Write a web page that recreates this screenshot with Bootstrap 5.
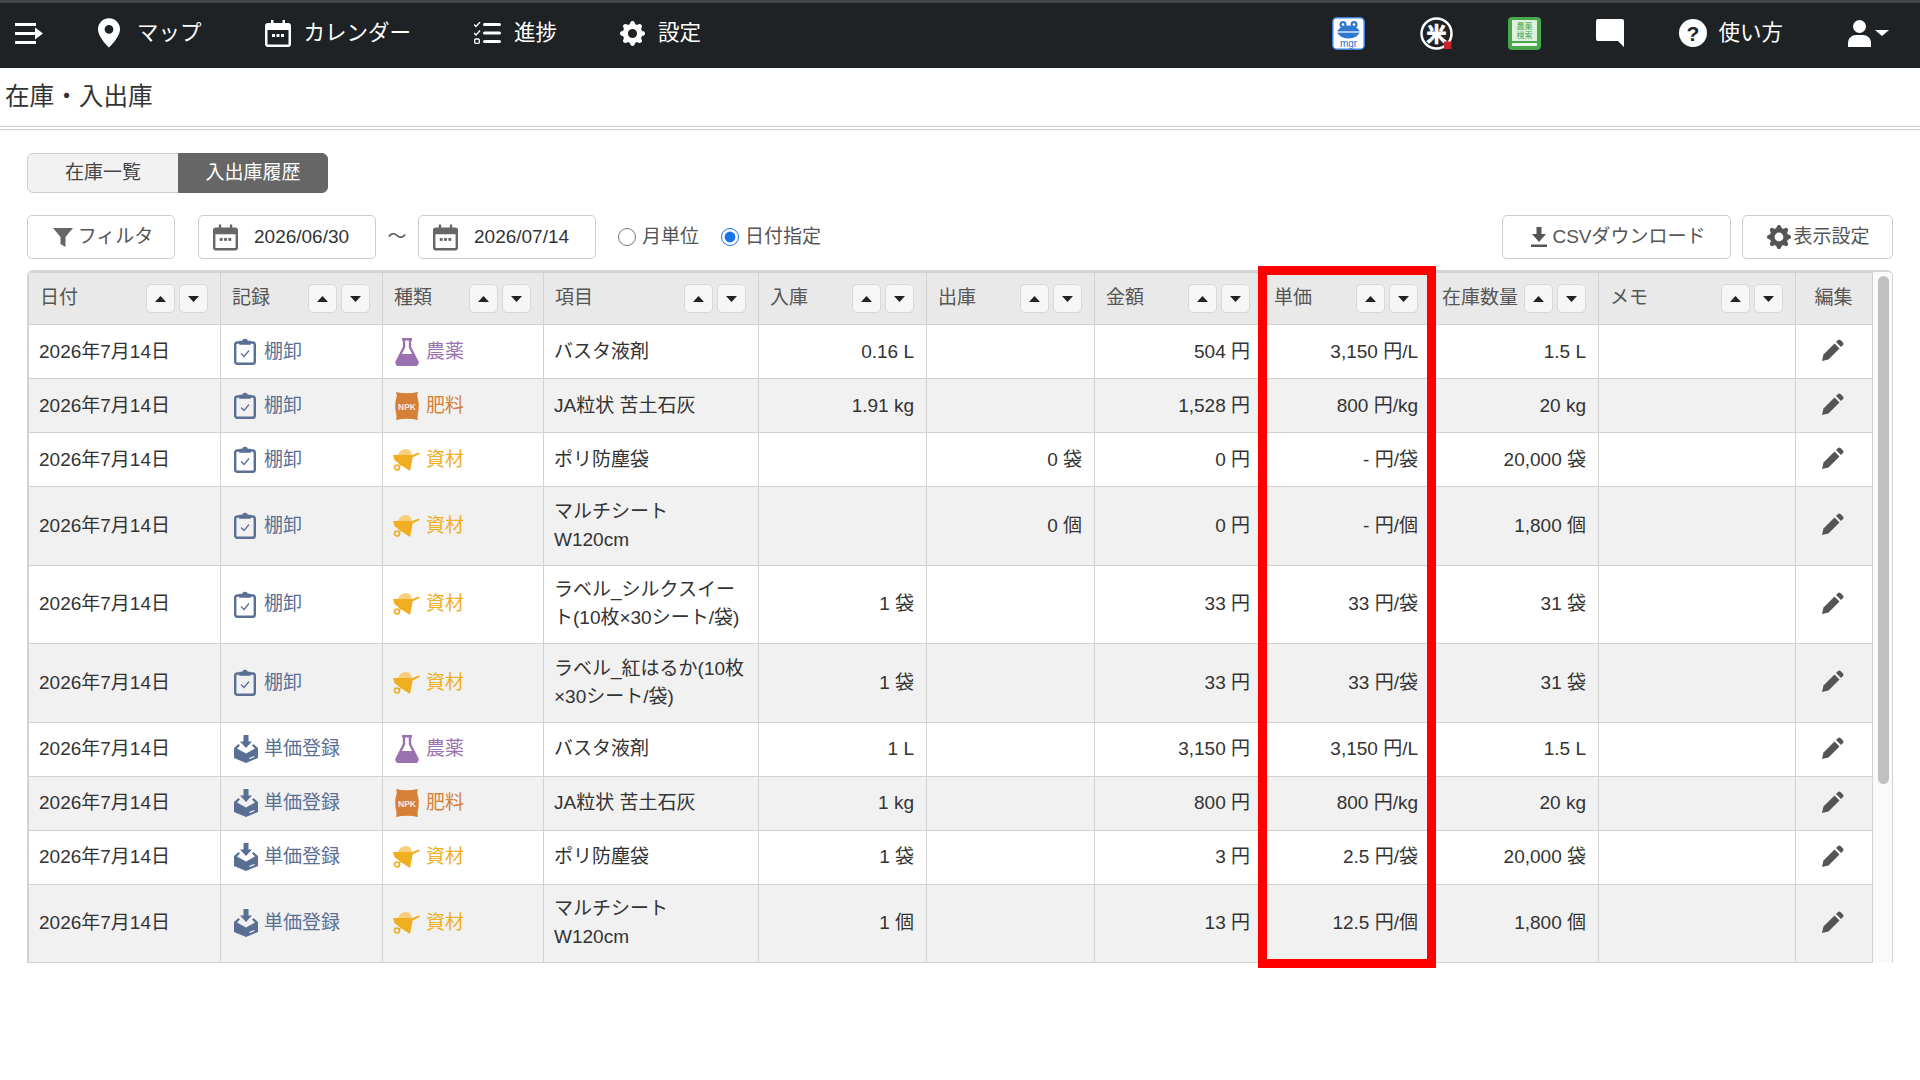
<!DOCTYPE html>
<html lang="ja">
<head>
    <meta charset="UTF-8">
    <meta name="viewport" content="width=device-width, initial-scale=1.0">
    <title>在庫・入出庫</title>
    <link href="https://cdn.jsdelivr.net/npm/bootstrap@5.3.3/dist/css/bootstrap.min.css" rel="stylesheet">
    <script src="https://cdn.jsdelivr.net/npm/bootstrap@5.3.3/dist/js/bootstrap.bundle.min.js"></script>
    <style>
        body {
            font-family: "Liberation Sans", "Noto Sans CJK JP", sans-serif;
            font-size: 19px;
            color: #333;
            background: #fff;
        }
        /* top bar */
        .top-bar {
            height: 68px;
            padding: 0 31px 5px 15px;
            background: #1e2225;
            border-top: 3px solid #444;
            flex-wrap: nowrap;
        }
        .top-group { gap: 63px; }
        .top-group-right { gap: 55px; }
        .navbar-nav .nav-link.top-link {
            color: #fff;
            font-size: 21.5px;
            padding: 0;
            gap: 13px;
        }
        .top-link-pin { margin-left: -8px; }
        .navbar-nav .nav-link.top-link.top-link-pin { gap: 17px; }
        .navbar-nav .nav-link.top-link.top-link-help { gap: 11px; }
        .top-user { margin-left: 10px; }

        /* page title */
        .page-head {
            height: 62px;
            padding-left: 5px;
            font-size: 24.6px;
            color: #333;
            border-bottom: 4px double #ccc;
        }

        .page-body { padding: 23px 27px 60px 27px; }

        /* tabs */
        .tab-btn {
            width: 150px;
            height: 40px;
            padding: 0;
            font-size: 19px;
            background: #f2f2f2;
            color: #444;
            border: 1px solid #ccc;
        }
        .tab-btn-first { width: 152px; }
        .tab-btn.active, .btn-group .tab-btn.active {
            background: #666;
            border-color: #666;
            color: #fff;
        }

        /* filter row */
        .filter-row { height: 44px; margin: 22px 0 11px 0; }
        .tool-btn {
            height: 44px;
            font-size: 19px;
            color: #555;
            background: #fff;
            border: 1px solid #ccc;
            border-radius: 5px;
            padding: 0;
        }
        .btn-filter { width: 148px; gap: 5px; margin-right: 23px; padding-left: 4px; }
        .date-box {
            width: 178px;
            height: 44px;
            padding-left: 14px;
            gap: 16px;
            border: 1px solid #ccc;
            border-radius: 5px;
            color: #333;
        }
        .date-sep { width: 42px; text-align: center; color: #555; }
        .radio-set { margin-left: 22px; gap: 22px; }
        .radio-item { gap: 6px; color: #555; margin: 0; }
        .radio-item input { width: 18px; height: 18px; margin: 0; accent-color: #1a73e8; }
        .btn-csv { width: 229px; gap: 5px; padding-left: 4px; }
        .btn-view { width: 151px; margin-left: 11px; gap: 2px; padding-left: 2px; }

        /* table */
        .tbl-outer { position: relative; }
        .tbl-frame {
            border: 1px solid #d4d4d4;
            border-bottom: 0;
            border-top-width: 2px;
            border-radius: 6px 6px 0 0;
            overflow: hidden;
        }
        .hist-table {
            table-layout: fixed;
            width: 1844px;
            margin: 0;
            border-color: #d2d2d2;
            --bs-table-color: #333;
            color: #333;
        }
        .hist-table th {
            height: 52px;
            padding: 0 12px 0 11px;
            background: #e9e9e9;
            --bs-table-bg: #e9e9e9;
            font-weight: 400;
            font-size: 19px;
            color: #555;
            vertical-align: middle;
        }
        .hist-table td {
            height: 54px;
            padding: 0 12px 0 10px;
            line-height: 28px;
            vertical-align: middle;
        }
        .hist-table tr.row-tall td { height: 78.5px; }
        .hist-table tbody tr:nth-child(even) td { --bs-table-bg: #f1f1f1; }
        .c-date { width: 192px; }
        .c-rec { width: 162px; }
        .c-kind { width: 161px; }
        .c-item { width: 215px; }
        .c-num { width: 168px; }
        .c-stock { width: 168px; }
        .c-memo { width: 197px; }
        .c-edit { width: 77px; }

        .sort-pair { gap: 4px; flex-shrink: 0; }
        .sort-btn {
            width: 29px;
            height: 29px;
            padding: 0;
            background: #f6f6f6;
            border: 1px solid #d8d8d8;
            border-radius: 5px;
        }
        .rec-cell { gap: 6px; color: #5a6f94; padding-left: 3px; }
        .kind-cell { gap: 6px; }
        .kind-nouyaku { color: #9b72b0; }
        .kind-hiryo { color: #d67f36; }
        .kind-shizai { color: #f0ae21; }
        .rec-ico { width: 24px; flex-shrink: 0; }
        .kind-ico { width: 27px; flex-shrink: 0; }
        .edit-ico { display: block; margin: -3px auto 0 auto; }

        /* fake scrollbar */
        .scroll-track { width: 21px; background: #fafafa; padding: 4px 5px 0 5px; }
        .scroll-thumb { width: 11px; height: 508px; background: #c1c1c1; border-radius: 6px; }

        /* red marking over the unit price column */
        .mark-box {
            position: absolute;
            left: 1231px;
            top: -4px;
            width: 178px;
            height: 702px;
            border: 9px solid #f00;
            pointer-events: none;
        }
    </style>
</head>
<body>

<nav class="navbar top-bar">
    <ul class="navbar-nav flex-row align-items-center top-group">
        <li class="nav-item d-flex">
            <svg width="28" height="21" viewBox="0 0 28 21" fill="#fff"><rect y="0" width="21" height="3"/><rect y="9" width="24" height="3"/><rect y="18" width="21" height="3"/><path d="M20 4.500l8 6-8 6z"/></svg>
        </li>
        <li class="nav-item">
            <a class="nav-link top-link top-link-pin d-flex align-items-center" href="#">
                <svg width="22" height="32" viewBox="2 0 12 16" fill="#fff"><path d="M8 16s6-5.686 6-10A6 6 0 0 0 2 6c0 4.314 6 10 6 10zm0-7.600a2.400 2.400 0 1 1 0-4.800 2.400 2.400 0 0 1 0 4.800z"/></svg>
                マップ
            </a>
        </li>
        <li class="nav-item">
            <a class="nav-link top-link d-flex align-items-center" href="#">
                <svg width="26" height="27" viewBox="0 0 26 27" fill="#fff"><path d="M6 0h2.500v3h9V0H20v3h3a3 3 0 0 1 3 3v18a3 3 0 0 1-3 3H3a3 3 0 0 1-3-3V6a3 3 0 0 1 3-3h3zM2.500 10v14a.5.5 0 0 0 .5.5h20a.5.5 0 0 0 .5-.5V10z"/><rect x="7" y="14" width="3" height="3"/><rect x="11.500" y="14" width="3" height="3"/><rect x="16" y="14" width="3" height="3"/></svg>
                カレンダー
            </a>
        </li>
        <li class="nav-item">
            <a class="nav-link top-link d-flex align-items-center" href="#">
                <svg width="27" height="22" viewBox="0 0 27 22" fill="#fff"><rect x="9" y="1" width="18" height="3" rx="1.500"/><rect x="9" y="9.500" width="18" height="3" rx="1.500"/><rect x="9" y="18" width="18" height="3" rx="1.500"/><path d="M0 2.500l2 2L6 0" fill="none" stroke="#fff" stroke-width="1.300"/><path d="M0 11l2 2 4-4.500" fill="none" stroke="#fff" stroke-width="1.300"/><rect x=".7" y="17" width="4.600" height="4.300" rx="1" fill="none" stroke="#fff" stroke-width="1.300"/></svg>
                進捗
            </a>
        </li>
        <li class="nav-item">
            <a class="nav-link top-link d-flex align-items-center" href="#">
                <svg width="25" height="25" viewBox="0 0 16 16" fill="#fff"><path d="M9.405 1.05c-.413-1.4-2.397-1.4-2.81 0l-.1.34a1.464 1.464 0 0 1-2.105.872l-.31-.17c-1.283-.698-2.686.705-1.987 1.987l.169.311c.446.82.023 1.841-.872 2.105l-.34.1c-1.4.413-1.4 2.397 0 2.81l.34.1a1.464 1.464 0 0 1 .872 2.105l-.17.31c-.698 1.283.705 2.686 1.987 1.987l.311-.169a1.464 1.464 0 0 1 2.105.872l.1.34c.413 1.4 2.397 1.4 2.81 0l.1-.34a1.464 1.464 0 0 1 2.105-.872l.31.17c1.283.698 2.686-.705 1.987-1.987l-.169-.311a1.464 1.464 0 0 1 .872-2.105l.34-.1c1.4-.413 1.4-2.397 0-2.81l-.34-.1a1.464 1.464 0 0 1-.872-2.105l.17-.31c.698-1.283-.705-2.686-1.987-1.987l-.311.169a1.464 1.464 0 0 1-2.105-.872l-.1-.34zM8 10.930a2.929 2.929 0 1 1 0-5.858 2.929 2.929 0 0 1 0 5.858z"/></svg>
                設定
            </a>
        </li>
    </ul>
    <ul class="navbar-nav flex-row align-items-center top-group-right ms-auto">
        <li class="nav-item d-flex">
            <svg width="33" height="33" viewBox="0 0 33 33"><rect x=".75" y=".75" width="31.500" height="31.500" rx="4" fill="#fff" stroke="#3b82d6" stroke-width="1.500"/><circle cx="11" cy="7.500" r="3.500" fill="#2f78cf"/><circle cx="22" cy="7.500" r="3.500" fill="#2f78cf"/><ellipse cx="16.500" cy="15" rx="11" ry="6.500" fill="#2f78cf"/><rect x="5.500" y="14.400" width="22" height="1.200" fill="#fff"/><circle cx="11" cy="7.500" r="1.300" fill="#fff"/><circle cx="22" cy="7.500" r="1.300" fill="#fff"/><text x="16.500" y="30" text-anchor="middle" font-size="10" font-family="Liberation Sans" fill="#2f78cf">mgr</text></svg>
        </li>
        <li class="nav-item d-flex">
            <svg width="33" height="33" viewBox="0 0 33 33"><circle cx="16.500" cy="16.500" r="15" fill="none" stroke="#fff" stroke-width="2.500"/><text x="16.500" y="24.500" text-anchor="middle" font-size="20" font-weight="700" font-family="Noto Sans CJK JP" fill="#fff" stroke="#fff" stroke-width=".8">米</text><rect x="24" y="24.500" width="7.500" height="7.500" fill="#c8202f"/></svg>
        </li>
        <li class="nav-item d-flex">
            <svg width="33" height="33" viewBox="0 0 33 33"><rect width="33" height="33" rx="4" fill="#46a84a"/><rect x="4" y="3" width="25" height="21" fill="#dff0df"/><rect x="4" y="26" width="25" height="3" fill="#e9f5e9"/><text x="16.500" y="12" text-anchor="middle" font-size="8" font-family="Noto Sans CJK JP" fill="#46a84a">農薬</text><text x="16.500" y="21" text-anchor="middle" font-size="8" font-family="Noto Sans CJK JP" fill="#46a84a">検索</text></svg>
        </li>
        <li class="nav-item d-flex">
            <svg width="28" height="28" viewBox="0 0 28 28" fill="#fff"><path d="M2 0h24a2 2 0 0 1 2 2v26l-6-6H2a2 2 0 0 1-2-2V2a2 2 0 0 1 2-2z"/></svg>
        </li>
        <li class="nav-item">
            <a class="nav-link top-link top-link-help d-flex align-items-center" href="#">
                <svg width="28" height="28" viewBox="0 0 28 28"><circle cx="14" cy="14" r="14" fill="#fff"/><text x="14" y="21.500" text-anchor="middle" font-size="21" font-weight="700" font-family="Liberation Sans" fill="#1e2225">?</text></svg>
                使い方
            </a>
        </li>
        <li class="nav-item d-flex align-items-center top-user">
            <svg width="23" height="27" viewBox="0 0 23 27" fill="#fff"><circle cx="11.500" cy="6.500" r="6.500"/><path d="M0 27v-4c0-5 4-8 8-8h7c4 0 8 3 8 8v4z"/></svg>
            <svg class="ms-1" width="14" height="6" viewBox="0 0 14 6" fill="#fff"><path d="M0 0h14L7 6z"/></svg>
        </li>
    </ul>
</nav>

<div class="page-head d-flex align-items-center">在庫・入出庫</div>

<div class="page-body">
    <div class="btn-group" role="group">
        <button type="button" class="btn tab-btn tab-btn-first">在庫一覧</button>
        <button type="button" class="btn tab-btn active">入出庫履歴</button>
    </div>

    <div class="filter-row d-flex align-items-center">
        <button type="button" class="btn tool-btn btn-filter d-flex align-items-center justify-content-center">
            <svg width="20" height="19" viewBox="0 0 20 19" fill="#666"><path d="M0 0h20l-7.500 9v10l-5-3V9z"/></svg>
            フィルタ
        </button>
        <div class="date-box d-flex align-items-center">
            <svg width="25" height="27" viewBox="0 0 26 27" fill="#666"><path d="M6 0h2.500v3h9V0H20v3h3a3 3 0 0 1 3 3v18a3 3 0 0 1-3 3H3a3 3 0 0 1-3-3V6a3 3 0 0 1 3-3h3zM2.500 10v14a.5.5 0 0 0 .5.5h20a.5.5 0 0 0 .5-.5V10z"/><rect x="7" y="14" width="3" height="3"/><rect x="11.500" y="14" width="3" height="3"/><rect x="16" y="14" width="3" height="3"/></svg>
            2026/06/30
        </div>
        <span class="date-sep">〜</span>
        <div class="date-box d-flex align-items-center">
            <svg width="25" height="27" viewBox="0 0 26 27" fill="#666"><path d="M6 0h2.500v3h9V0H20v3h3a3 3 0 0 1 3 3v18a3 3 0 0 1-3 3H3a3 3 0 0 1-3-3V6a3 3 0 0 1 3-3h3zM2.500 10v14a.5.5 0 0 0 .5.5h20a.5.5 0 0 0 .5-.5V10z"/><rect x="7" y="14" width="3" height="3"/><rect x="11.500" y="14" width="3" height="3"/><rect x="16" y="14" width="3" height="3"/></svg>
            2026/07/14
        </div>
        <div class="radio-set d-flex align-items-center">
            <label class="radio-item d-flex align-items-center"><input type="radio" name="span">月単位</label>
            <label class="radio-item d-flex align-items-center"><input type="radio" name="span" checked>日付指定</label>
        </div>
        <button type="button" class="btn tool-btn btn-csv d-flex align-items-center justify-content-center ms-auto">
            <svg width="16" height="20" viewBox="0 0 16 20" fill="#555"><path d="M5.500 0h5v7H15l-7 8-7-8h4.500z"/><rect y="17.500" width="16" height="2.500"/></svg>
            CSVダウンロード
        </button>
        <button type="button" class="btn tool-btn btn-view d-flex align-items-center justify-content-center">
            <svg width="24" height="24" viewBox="0 0 16 16" fill="#555"><path d="M9.405 1.05c-.413-1.4-2.397-1.4-2.81 0l-.1.34a1.464 1.464 0 0 1-2.105.872l-.31-.17c-1.283-.698-2.686.705-1.987 1.987l.169.311c.446.82.023 1.841-.872 2.105l-.34.1c-1.4.413-1.4 2.397 0 2.81l.34.1a1.464 1.464 0 0 1 .872 2.105l-.17.31c-.698 1.283.705 2.686 1.987 1.987l.311-.169a1.464 1.464 0 0 1 2.105.872l.1.34c.413 1.4 2.397 1.4 2.81 0l.1-.34a1.464 1.464 0 0 1 2.105-.872l.31.17c1.283.698 2.686-.705 1.987-1.987l-.169-.311a1.464 1.464 0 0 1 .872-2.105l.34-.1c1.4-.413 1.4-2.397 0-2.81l-.34-.1a1.464 1.464 0 0 1-.872-2.105l.17-.31c.698-1.283-.705-2.686-1.987-1.987l-.311.169a1.464 1.464 0 0 1-2.105-.872l-.1-.34zM8 10.930a2.929 2.929 0 1 1 0-5.858 2.929 2.929 0 0 1 0 5.858z"/></svg>
            表示設定
        </button>
    </div>

    <div class="tbl-outer">
        <div class="tbl-frame d-flex">
            <table class="table table-bordered hist-table">
                <colgroup>
                    <col class="c-date"><col class="c-rec"><col class="c-kind"><col class="c-item">
                    <col class="c-num"><col class="c-num"><col class="c-num"><col class="c-num">
                    <col class="c-stock"><col class="c-memo"><col class="c-edit">
                </colgroup>
                <thead><tr id="headRow"></tr></thead>
                <tbody id="tableBody"></tbody>
            </table>
            <div class="scroll-track flex-shrink-0"><div class="scroll-thumb"></div></div>
        </div>
        <div class="mark-box"></div>
    </div>
</div>

<script>
    const sortUp = '<svg width="11" height="6" viewBox="0 0 11 6" fill="#222"><path d="M5.500 0L11 6H0z"/></svg>';
    const sortDown = '<svg width="11" height="6" viewBox="0 0 11 6" fill="#222"><path d="M0 0h11L5.500 6z"/></svg>';

    const iconClip = '<svg width="22" height="27" viewBox="0 0 22 27" fill="none" stroke="#5a6f94"><rect x="1.200" y="4.500" width="19.600" height="21.300" rx="2" stroke-width="2.400"/><path d="M6 6V3.500h3a2 2 0 0 1 4 0h3V6z" fill="#5a6f94" stroke-width="1.500"/><path d="M7 15.500l3 3 5-6" stroke-width="1.300"/></svg>';
    const iconInbox = '<svg width="24" height="28" viewBox="0 0 24 28" fill="#5a6f94"><path d="M9.500 0h5v6.500H18L12 13 6 6.500h3.500z"/><path d="M4.500 9L0 13v10l12 5 12-5V13l-4.500-4-1.500 1.500 3 3-9 5-9-5 3-3z"/><path d="M15.500 23.500l5-2" stroke="#fff" stroke-width="1.200"/></svg>';
    const iconFlask = '<svg width="24" height="28" viewBox="0 0 24 28"><path d="M7 1.200h10M9 1.200v8L2 23a2.500 2.500 0 0 0 2 4h16a2.500 2.500 0 0 0 2-4L15 9.200v-8" fill="none" stroke="#9b72b0" stroke-width="2.400"/><path d="M5.500 16h13l4 8.500a2 2 0 0 1-2 3H3.500a2 2 0 0 1-2-3z" fill="#9b72b0"/></svg>';
    const iconBag = '<svg width="24" height="28" viewBox="0 0 24 28"><path d="M1 0q11 2.500 22 0q-1.500 4 0 7q1.500 7 0 14q-1 4 0 7q-11-2.500-22 0q1-3 0-7q-1.500-7 0-14q1.500-3 0-7z" fill="#d67f36"/><text x="12" y="17.500" text-anchor="middle" font-size="8.500" font-weight="700" font-family="Liberation Sans" fill="#fff" opacity=".85">NPK</text></svg>';
    const iconBarrow = '<svg width="27" height="22" viewBox="0 0 27 22" fill="#f0ae21"><path d="M5 6q2-6 8-6q5 0 6 6z" fill="#f7cf7a"/><path d="M0 6h19l7-2.500.8 1.600-7 3.200L17 22 7 15.500 1.500 11z"/><circle cx="4" cy="18.500" r="2.500" fill="none" stroke="#f0ae21" stroke-width="1.700"/><path d="M6 17l4-3" stroke="#f0ae21" stroke-width="1.500"/></svg>';
    const iconPencil = '<svg class="edit-ico" width="22" height="22" viewBox="0 0 22 22" fill="#555"><path d="M0 22l1.500-6.500L12.500 4.500l5 5L6.500 20.500z"/><path d="M14 3l2-2a2 2 0 0 1 2.500 0L21 3.500a2 2 0 0 1 0 2.500l-2 2z"/></svg>';

    const records = {
        tana: { label: "棚卸", icon: iconClip },
        unit: { label: "単価登録", icon: iconInbox }
    };
    const kinds = {
        nouyaku: { label: "農薬", icon: iconFlask, cls: "kind-nouyaku" },
        hiryo: { label: "肥料", icon: iconBag, cls: "kind-hiryo" },
        shizai: { label: "資材", icon: iconBarrow, cls: "kind-shizai" }
    };

    const columns = ["日付", "記録", "種類", "項目", "入庫", "出庫", "金額", "単価", "在庫数量", "メモ"];

    const rows = [
        ["tana", "nouyaku", "バスタ液剤", "0.16 L", "", "504 円", "3,150 円/L", "1.5 L"],
        ["tana", "hiryo", "JA粒状 苦土石灰", "1.91 kg", "", "1,528 円", "800 円/kg", "20 kg"],
        ["tana", "shizai", "ポリ防塵袋", "", "0 袋", "0 円", "- 円/袋", "20,000 袋"],
        ["tana", "shizai", "マルチシート<br>W120cm", "", "0 個", "0 円", "- 円/個", "1,800 個"],
        ["tana", "shizai", "ラベル_シルクスイー<br>ト(10枚×30シート/袋)", "1 袋", "", "33 円", "33 円/袋", "31 袋"],
        ["tana", "shizai", "ラベル_紅はるか(10枚<br>×30シート/袋)", "1 袋", "", "33 円", "33 円/袋", "31 袋"],
        ["unit", "nouyaku", "バスタ液剤", "1 L", "", "3,150 円", "3,150 円/L", "1.5 L"],
        ["unit", "hiryo", "JA粒状 苦土石灰", "1 kg", "", "800 円", "800 円/kg", "20 kg"],
        ["unit", "shizai", "ポリ防塵袋", "1 袋", "", "3 円", "2.5 円/袋", "20,000 袋"],
        ["unit", "shizai", "マルチシート<br>W120cm", "1 個", "", "13 円", "12.5 円/個", "1,800 個"]
    ];

    document.getElementById("headRow").innerHTML = columns.map(name => `
        <th><div class="d-flex align-items-center justify-content-between">
            <span class="text-nowrap">${name}</span>
            <span class="sort-pair d-flex">
                <button type="button" class="btn sort-btn d-flex align-items-center justify-content-center">${sortUp}</button>
                <button type="button" class="btn sort-btn d-flex align-items-center justify-content-center">${sortDown}</button>
            </span>
        </div></th>`).join("") + '<th class="text-center">編集</th>';

    document.getElementById("tableBody").innerHTML = rows.map(r => {
        const rec = records[r[0]];
        const kind = kinds[r[1]];
        const tall = r[2].includes("<br>") ? "row-tall" : "";
        return `<tr class="${tall}">
            <td>2026年7月14日</td>
            <td><div class="rec-cell d-flex align-items-center"><span class="rec-ico d-flex">${rec.icon}</span>${rec.label}</div></td>
            <td><div class="kind-cell d-flex align-items-center ${kind.cls}"><span class="kind-ico d-flex justify-content-center">${kind.icon}</span>${kind.label}</div></td>
            <td>${r[2]}</td>
            <td class="text-end">${r[3]}</td>
            <td class="text-end">${r[4]}</td>
            <td class="text-end">${r[5]}</td>
            <td class="text-end">${r[6]}</td>
            <td class="text-end">${r[7]}</td>
            <td></td>
            <td class="text-center">${iconPencil}</td>
        </tr>`;
    }).join("");
</script>

</body>
</html>
